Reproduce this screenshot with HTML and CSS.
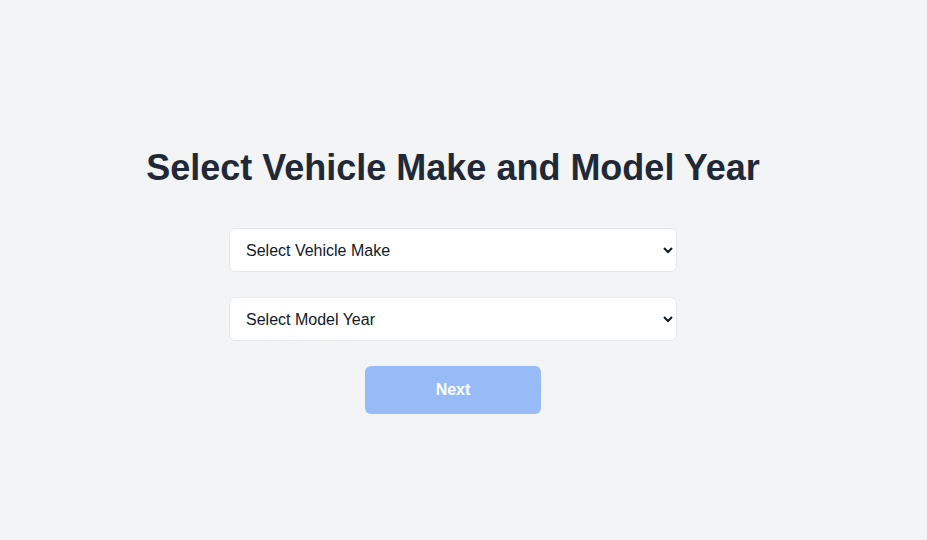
FILE: index.html
```html
<!DOCTYPE html>
<html lang="en">
<head>
<meta charset="utf-8">
<title>Select Vehicle</title>
<link rel="stylesheet" href="styles.css">
</head>
<body>
<main class="page">
  <h1 class="title">Select Vehicle Make and Model Year</h1>
  <form class="form">
    <select class="field">
      <option>Select Vehicle Make</option>
    </select>
    <select class="field">
      <option>Select Model Year</option>
    </select>
    <button type="button" class="next" disabled>Next</button>
  </form>
</main>
</body>
</html>
```

FILE: styles.css
```css
* { box-sizing: border-box; }
html, body { margin: 0; padding: 0; }
body {
  background: #f3f4f6;
  font-family: "Liberation Sans", Arial, sans-serif;
  color: #1f2937;
}
.page {
  min-height: 540px;
  display: flex;
  flex-direction: column;
  align-items: center;
  justify-content: center;
  padding: 22px 21px 0 0;
}
.title {
  margin: 0 0 40px;
  font-size: 36px;
  line-height: 40px;
  font-weight: 700;
  color: #1f2937;
}
.form {
  width: 448px;
  display: flex;
  flex-direction: column;
  align-items: center;
}
.field {
  width: 100%;
  height: 44px;
  margin-bottom: 25px;
  padding: 0 8px 0 12px;
  font-family: "Liberation Sans", Arial, sans-serif;
  font-size: 16px;
  color: #111827;
  background: #ffffff;
  border: 1px solid #e5e7eb;
  border-radius: 6px;
}
.next {
  width: 176px;
  height: 48px;
  border: none;
  border-radius: 6px;
  background: #97bbf7;
  color: #ffffff;
  font-family: "Liberation Sans", Arial, sans-serif;
  font-size: 16px;
  font-weight: 700;
}
```
